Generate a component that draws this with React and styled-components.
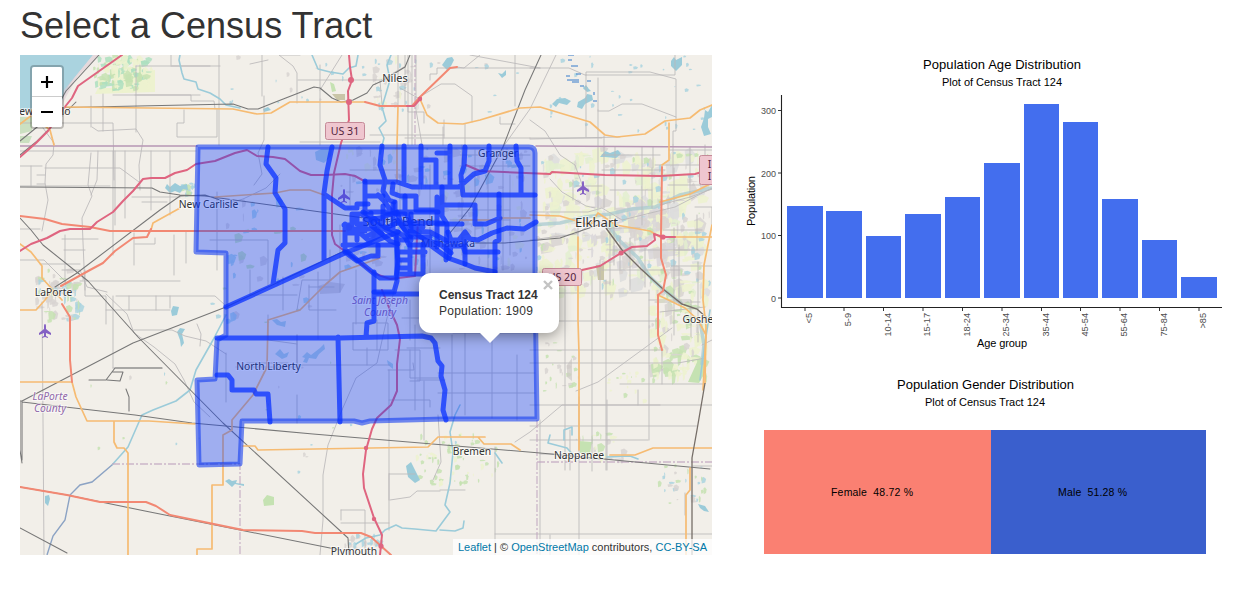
import React from "react";
import styled, { createGlobalStyle } from "styled-components";

const GlobalStyle = createGlobalStyle`
  body { margin: 0; background: #fff; color: #333; font-family: "Liberation Sans", Arial, sans-serif; }
  * { box-sizing: border-box; }
`;

const Page = styled.main`
  width: 1244px;
  height: 603px;
  padding: 6px 12px 0 20px;
  overflow: hidden;
`;
const Title = styled.h2`
  margin: 0 0 9px;
  font-size: 36px;
  line-height: 40px;
  font-weight: 400;
`;
const Columns = styled.div`
  display: grid;
  grid-template-columns: 692px 490px;
  gap: 30px;
`;
const MapFrame = styled.section`
  position: relative;
  width: 692px;
  height: 500px;
  overflow: hidden;
  background: #f2efe9;
`;
const MapDrawing = styled.svg`
  display: block;
  width: 692px;
  height: 500px;
`;
const Charts = styled.section`
  display: flex;
  flex-direction: column;
`;
const ChartDrawing = styled.svg`
  display: block;
  width: 490px;
  height: ${(p) => p.$height}px;
  font-family: "Liberation Sans", Arial, sans-serif;
`;
const ZoomControl = styled.div`
  position: absolute;
  left: 10px;
  top: 10px;
  width: 34px;
  border: 2px solid rgba(0, 0, 0, 0.22);
  border-radius: 4px;
  background-clip: padding-box;
  overflow: hidden;
`;
const ZoomButton = styled.button`
  display: flex;
  align-items: center;
  justify-content: center;
  width: 30px;
  height: 30px;
  padding: 0;
  border: 0;
  border-bottom: ${(p) => (p.$first ? "1px solid #ccc" : "0")};
  background: #fff;
  color: #000;
`;
const Popup = styled.div`
  position: absolute;
  left: 399px;
  top: 218px;
  width: 140px;
  height: 60px;
  padding: 14px 20px;
  border-radius: 12px;
  background: #fff;
  box-shadow: 0 3px 14px rgba(0, 0, 0, 0.4);
  font-size: 12px;
  line-height: 16px;
  letter-spacing: 0.25px;
  white-space: nowrap;
`;
const PopupTip = styled.span`
  position: absolute;
  left: 61px;
  top: 60px;
  border: 10px solid transparent;
  border-top-color: #fff;
  border-bottom: 0;
`;
const CloseButton = styled.svg`
  position: absolute;
  right: 6px;
  top: 7px;
  width: 10px;
  height: 10px;
`;
const PopupTitle = styled.strong`
  display: block;
  letter-spacing: 0;
`;
const Attribution = styled.div`
  position: absolute;
  right: 0;
  bottom: 0;
  height: 16px;
  padding: 0 5px;
  background: rgba(255, 255, 255, 0.75);
  font-size: 11px;
  line-height: 16px;
  white-space: nowrap;
`;
const MapLink = styled.a`
  color: #0078a8;
`;

const MINOR = [
  "M20 123H113L114 180M20 151H196M20 166H42M31 166V186M20 186H110M45 168H120L139 182M37 175H45M37 184H45M20 229H40",
  "M136 66V132M136 66H220M135 95H200M103 94L103 131M91 96V127M92 127L98 131 136 129 143 140 139 165 140 190M113 95H191V101H214L215 109",
  "M171 55V65M171 66H210M184 110V123H177V137H217V109M219 55V145M217 192V270M113 151V255M91 153L88 185 92 196 82 218 85 290",
  "M115 151V225M98 151L97 180 91 195M125 151V218M151 151V210M170 151V215M132 197H180M142 202H167M65 235V285M62 239H98M64 250H85M40 264H80M134 233V265",
  "M174 235V275M155 238V244H135M186 232V263M80 281H180M62 270H80L87 287 107 292M20 260H44L66 282M43 128L54 143 53 155 46 164 45 183 48 200 42 231",
  "M42 302L43 420 44 555M85 270V296H106V324M106 294L127 314 134 333 154 347 175 364 184 380 194 402 210 417M134 330H172L185 336 206 341 226 354",
  "M113 296V368M129 296V310M156 296V310M106 310H170M170 296V308M116 296H215L225 305M197 324L201 334 200 346M113 368H162",
  "M300 55L279 55 293 66 297 73V103M298 80H381L404 67M320 65V145M320 90L342 55M380 81L382 104M250 64L268 60M262 55V96M264 96V140L258 153 262 174 254 185",
  "M400 88L418 98 441 84 455 84 472 96V122M408 106V112H424V123M430 80V74H437V68H540M443 127V145M465 124V145M500 117V124H515M515 55V106M480 55L464 68 457 67",
  "M416 55L416 110 423 150M398 55V105M405 55L405 105M408 55V145M370 135H444M444 120V138M300 142H380M405 138H530M412 55V145",
  "M470 55L540 68M530 68H569L585 75H675V55M586 75V72H650L676 79V131H673V145M586 75V137M598 78V110M598 111H609L622 104H642L676 117M530 138H602M620 137L530 139",
  "M556 55L530 109 503 147M530 120L545 131 560 155 575 165 583 187M598 110V208M604 136V208M653 147V168M602 155H660M602 170H665M652 168V208M673 145V176M615 147V210M642 147V225",
  "M655 165H705V145M668 185H700M669 150H712M674 168V203M690 147V198M700 160V185M550 179L562 192 586 206 595 208M573 180V200M576 186H602M610 190H652",
  "M530 212H588L602 208 622 220 675 207 712 188M660 205L690 197 712 189M530 240L576 234 598 220M578 225V270M610 215V285M614 222V265M663 230H702M674 228V335M697 215V250",
  "M606 228H640M610 250H690M602 270H680M620 236V270M645 248V287M630 238V290M600 260V320M671 266H712M679 245V305M698 262V342M674 250H712M695 207H712V230",
  "M530 293H649M530 321H657M530 350H663M530 363H678L705 358M530 405H660M530 426H697M530 440H648",
  "M565 285V470M592 276V471M606 280V470M649 290V440",
  "M662 350V384M649 300H691V337M620 384H703M576 391L598 382 672 328M515 442L530 432 562 405H712M540 420V555M495 447V555M579 397V555M607 400V470M495 534H712M440 490H465",
  "M389 370V474H415M389 500V474M389 474V530M341 510H365V555M341 510V520M341 523H389M320 555L323 520 323 475 328 445 342 410 356 378 377 363 387 318 402 260M413 363L414 370H388",
  "M353 323H388V350H353V323M367 348V365M377 320V350M395 350H420V381H410M410 350V378H440M424 381V440M440 491H417L410 497 390 500M438 415L441 462 433 480",
  "M226 353V402M236 367H297V335M297 335V365H390M297 395V423M247 363H288M268 315L268 340 297 344M297 310L302 280H330V250M309 287H334M318 272V339M283 277V310",
  "M223 205L243 199 266 188 280 174M210 240H268V285M250 270V295H297M340 225V292M356 270V324M309 285V310H336M462 145V255M430 220V280M410 300V340M465 298V415M492 335V418",
  "M453 333H535M438 373H535M438 393H535M452 335V417M517 355V420M402 318H535M415 325V410M417 380H445M407 348H440M389 400H430V407",
  "M460 155H530M460 166H530M475 150V240M488 150V270M503 146V270M510 175V255M430 165V245M400 175V258M384 170V205M350 175V205M350 170H400M370 220H438M450 210H510M450 220H510",
  "M712 340L702 345M660 312L705 307M655 302H700M638 390V405M570 430V470M583 459H612M540 454H555M693 466H712M685 493V515M550 535V555"
];
const RAIL = [
  "M20 141L53 114 66 91 99 55M20 155L36 142 76 102M60 108L67 107.5 233 104 248 109 258 109 273 103 314 87 320 88 332 98 341 102 353 100 367 93 373 85 382 81 405 67 410 55",
  "M20 187L152 188 160 192 180 195 205 196 400 223M55 287L77 273 160 210 180 196 205 195 223 201M20 218L31 230 43 245 88 281 138 337 223 423 348 538 349 555",
  "M20 401L22 401 133 343 226 307 344 251M22 402L135 415 192 423 313 434 540 453 710 469M20 402L20 450 22 463M22 401V460M541 55L525 90 503 147 470 208 450 233",
  "M20 487L67 495 145 511 340 550M20 528L67 553M162 368H115L106 380H89M106 380L112 372H123L120 381 107 380M126 389L129 397V411M475 243H505L560 238 598 225"
];
const ORANGE = [
  "M65 107L233 109 257 114 271 113 290 102 365 102M20 124L32 115 50 130 54 145M20 244L31 252 42 266 42 278 62 300M20 310H36L45 300 52 290M180 208L153 223 151 230",
  "M20 382H72L76 397 87 421 113 421 149 421 195 424M114 422V442L117 448 124 448 128 453V555M197 555V549H212V485H223V435L232 430 232 420 253 395 267 367 268 320 300 310 326 284 340 272 380 258",
  "M243 446L255 446 258 450 428 447 438 437 485 437M440 437H478L484 444H511L520 450M610 455H635L653 448 712 448M420 99L427 115 438 123 463 124 480 120 520 108 540 107 590 122 605 135 617 137 645 134 665 121 690 118 700 110 712 105",
  "M398 106L397 145 397 182M669 123V160L662 165M215 197L275 193 290 190 310 190 324 195M530 215L560 216 590 225 598 213 616 225 650 231 660 237 712 237M578 237V320L579 353V450M712 225L704 265 703 300 706 326 705 383",
  "M660 202L690 194 712 183M658 295L685 308 698 320 706 335 703 390M690 468V490L686 495V555M500 218H530M460 220H500"
];
const TRUNK = [
  "M20 216L45 219 62 224 90 227 110 231 345 231M61 286L90 270 103 263 115 251 133 238 147 237 151 229M62 304L70 317V360L72 382M20 487L67 495 100 502H146L156 506 170 515 243 530 302 531 315 533 361 533 371 537 391 555",
  "M365 102L380 106H412L420 97 450 68 457 67M662 167L661 235 661 258 666 275 663 291 658 295V335L662 350"
];
const MOTORWAY = [
  "M122 55L95 74 78 86 72 98 64 108 48 131 36 143 20 157M20 251L31 244 47 238 60 231 70 229H90L97 222 113 212 123 201 133 191 143 179 151 178H165L175 173 187 170 196 164 215 161 235 153 247 150 257 156 273 157 285 159 300 171 311 175 325 175 345 174 355 176 366 182",
  "M466 165L480 171 550 174 552 172 605 175 660 176 695 174 705 171H712M349 55L350 67 352 80 348 91 349 120 341 143 334 173 332 195 332 235 335 244 350 255 373 273 390 279 415 276 418 220M382 290L390 310 397 325 400 339 397 364 397 391 391 405 377 418 372 429 366 450 363 474 364 488 374 518 382 535 380 555",
  "M582 270L600 266 621 253 632 247 647 246 655 240 654 234 663 237H675M407 106H414L421 98"
];
const WATER = [
  "M180 55L179 60 182 73 184 79 196 82 198 89 210 93 220 99 226 105 240 108M312 55L318 69 330 72 343 74 349 68 356 66 358 55M391 55L387 65 390 80 382 107 386 121 379 128 384 138 380 154",
  "M226 315L213 340 196 370 190 390 176 401 153 410 142 415 128 447 112 465M460 405L455 415 450 432 453 452 450 483 445 505 450 512 436 531 415 529 402 528 396 525 385 530 380 535 366 538 356 544M440 530L455 531 463 528 464 521",
  "M550 435L548 443 567 448 575 457M564 440V430L572 427V435M607 457L630 456 638 459M710 310L704 350 700 380M495 453L502 463"
];

const TRACTS = [
  "M268 147L266 164 276 178 275 193 285 209V243L278 250 273 284M332 147L327 171 324 193V260M226 307L345 253 398 232M324 194L336 202 345 208H357V204H368",
  "M382 146L380 165 385 180 383 191 389 200 394 202M365 182H397L412 187H459L474 174 485 171 489 161V146M404 146V184M421 146V187M422 160H436V187M437 153H450M450 146V187M465 147L464 166 461 175 463 195H535M516 146L517 161 521 168V194",
  "M365 181V212H395V202M365 196H383M378 195L384 201 391 211 396 214M393 184L392 193 400 196H416V210H441M442 187V216L447 224 446 260M437 197V247M442 205H475V224H486L500 218M499 194V240L495 242V273",
  "M536 222L524 229 507 228 492 233 478 240 470 239 465 232 458 241 447 241 430 232 410 231M465 232V264M448 232L451 240 463 240M398 212H438M405 196V213M407 214L411 226 423 227M437 224H462",
  "M345 224V250L372 272 380 278 396 278 398 262 396 236 375 223 363 215M344 225H352V214H365M357 214V224H365V231H357V240M343 245H397M345 233H360L369 241 382 234M345 229H375M365 220L380 218 397 212 402 226 409 237H430M367 236L397 223H443",
  "M363 212L375 219 386 228 398 232 405 237 409 245H430L448 258 465 264 475 268 495 272M383 206V222M371 213V225L390 241 398 244M397 220L411 236M401 224L427 241 440 244 451 253M393 204V230M387 214H405M411 214V235",
  "M397 235V281L394 292 374 292M410 237V274M423 244V274H397M398 252H425M398 260H410M398 268H410M398 240H411M449 258L451 246 463 246 465 252H498",
  "M345 252L357 261 371 256H378V245M374 272V321L367 323 366 337M374 294H440M217 338H340L422 336 431 338 435 343 438 361 442 366 441 376 445 390 443 410 446 420M338 337L340 422M217 375H228L232 380V390H254L256 394H268L270 422"
];
const COUNTY = "M198 147H529Q535 147 535 153V280L537 419 444 419 370 421 362 423 354 421 242 421 240 464 199 465 197 380 215 379 217 340 226 335V253L196 252Z";

const random = (seed) => {
  let s = seed;
  return () => {
    s = (s * 16807) % 2147483647;
    return s / 2147483647;
  };
};
const patches = (seed, x, y, w, h, count, size, colors) => {
  const next = random(seed);
  return Array.from({ length: count }, () => {
    const pw = 1 + next() * size;
    const ph = 1 + next() * size;
    const px = x + next() * (w - pw);
    const py = y + next() * (h - ph);
    const fill = colors[Math.floor(next() * colors.length)];
    return { d: `M${px} ${py}l${pw * 0.5} ${-ph * 0.2} ${pw * 0.5} ${ph * 0.4} ${-pw * 0.2} ${ph * 0.6} ${-pw * 0.7} ${ph * 0.2}z`, fill };
  });
};
const GREY = "#d8d3d1";
const YELLOW = "#edf2cf";
const GREEN = "#c5e2b2";
const BLUE = "#aad3df";
const PATCHES = [
  ...patches(71, 93, 55, 60, 38, 110, 9, [YELLOW, GREEN, "#addfbf", YELLOW]),
  ...patches(13, 536, 147, 176, 155, 260, 15, [GREY, YELLOW, YELLOW, YELLOW, "#dddddd", "#e3efcf"]),
  ...patches(17, 590, 195, 90, 75, 75, 13, ["#d9d6d9", GREY]),
  ...patches(18, 536, 150, 176, 145, 180, 6, [GREY, GREEN, GREY, YELLOW, BLUE]),
  ...patches(78, 648, 280, 62, 105, 120, 12, [YELLOW, YELLOW, GREY, GREEN]),
  ...patches(29, 340, 146, 190, 125, 180, 9, [GREY, GREY, YELLOW, GREY, BLUE]),
  ...patches(92, 598, 370, 65, 35, 20, 4, [GREEN, YELLOW]),
  ...patches(39, 415, 433, 85, 55, 65, 5, [GREEN, YELLOW, GREEN]),
  ...patches(44, 568, 432, 60, 32, 26, 8, [GREY, GREEN, YELLOW]),
  ...patches(52, 35, 269, 50, 54, 70, 8, [BLUE, GREY, GREY, GREEN]),
  ...patches(65, 372, 55, 48, 57, 32, 7, [GREY, GREY, YELLOW, BLUE]),
  ...patches(99, 540, 55, 168, 78, 35, 4, [BLUE]),
  ...patches(105, 206, 195, 110, 130, 40, 8, [GREEN, BLUE, GREY]),
  ...patches(114, 657, 463, 53, 42, 28, 5, [GREY, GREEN, BLUE]),
  ...patches(208, 226, 55, 300, 65, 35, 4, [BLUE, GREY, BLUE]),
  ...patches(305, 180, 182, 18, 16, 16, 5, [BLUE, GREEN]),
  ...patches(322, 80, 350, 390, 130, 24, 3, [GREY, GREEN, BLUE]),
  ...patches(407, 540, 340, 42, 52, 24, 5, [GREY, GREEN, GREY]),
  ...patches(422, 343, 534, 42, 17, 25, 6, [GREY, BLUE, GREY])
];
const PONDS = [
  "M165 188l2-4 3 3 5-4 5 3 7-2 1 6-5-1-3 4-5-2-5 2z", "M263 109l5-2 3 3-7 2z",
  "M442 65l5-7 5-1 2 3-3 6-4 4z", "M498 73l4 1 4-4v5l-4 3z", "M552 104l5-5 8-1 6 3-4 4-8-2-3 4z",
  "M577 107l1-5 7-4 2-4 5 1 1 5-8 4-3 5z", "M583 88l3-3 2 3 3 3-4 1z", "M600 157l5-6 5 2 8-3 3 4-5 4-11-1z", "M671 61l3-4 2 3 6-3v8l-6 6-5-5z",
  "M701 127l3-9 1-8 3 2 4-7v12l-4 2v8l3 7-7 2z", "M406 466l5-4 5 10 4 8-5 3-7-6z", "M698 504l7 2 4 6-5-1-4-3z",
  "M171 311l2-5 6 1-2 8-5 1z", "M225 481l4-2 3 2 5-1-1 3 8 1v2l-9-2-3 3z", "M45 496l4-1 1 4-2 7-3-3z", "M177 332l3-4 5 1-3 5 2 9-3 4-1-7z"
];
const COUNTY_PONDS = [
  "M302 357l5-5 4 3 9-7 4-4 1 5-6 5-3 5-7-1-2 5-4-1 2-4z",
  "M275 354l5-5 4 5 5-2-2 5-5 2z", "M387 360l6 4 0 5-5-4z", "M315 152l6-3 11 0-1 7-7 7-8-3z", "M272 320l5-1 4 3 5-1-1 6-8-2z"
];
const PLANE = "M0-7Q1-7 1-5V-2L6 2V4L1 2V5L3 6V7L0 6-3 7V6L-1 5V2L-6 4V2L-1-2V-5Q-1-7 0-7Z";

const MapLines = ({ lines, ...rest }) => (
  <g fill="none" strokeLinejoin="round" strokeLinecap="round" {...rest}>
    {lines.map((d, i) => <path key={i} d={d} />)}
  </g>
);

const PLACES = [
  { name: "Niles", x: 395, y: 82, size: 11 },
  { name: "New Carlisle", x: 208.5, y: 208, size: 10.3 },
  { name: "Granger", x: 498, y: 157, size: 10.3 },
  { name: "South Bend", x: 398, y: 226, size: 13, fill: "#333" },
  { name: "Mishawaka", x: 448, y: 247, size: 10.3, fill: "#333" },
  { name: "Elkhart", x: 596.5, y: 227, size: 13 },
  { name: "LaPorte", x: 53.5, y: 296, size: 10.3 },
  { name: "North Liberty", x: 268.5, y: 370, size: 10.3 },
  { name: "Bremen", x: 472, y: 455, size: 10.3 },
  { name: "Nappanee", x: 579, y: 459, size: 10.3 },
  { name: "Plymouth", x: 354, y: 555, size: 10.3 },
  { name: "Goshen", x: 701, y: 323, size: 10.3 },
  { name: "New Buffalo", x: 41, y: 115, size: 10.3 }
];

const Shield = ({ x, y, w, h = 17, lines }) => (
  <g>
    <rect x={x} y={y} width={w} height={h} rx="2" fill="#efc6cf" stroke="#c58a98" />
    {lines.map((line, i) => (
      <text key={i} x={x + w / 2} y={y + 12.5 + i * 12} textAnchor="middle" fontSize="10.6" fill="#53243d">{line}</text>
    ))}
  </g>
);

function TractMap() {
  return (
    <MapFrame>
      <MapDrawing viewBox="20 55 692 500" fontFamily='"Noto Sans", sans-serif'>
        <path fill="#aad3df" d="M20 55H93L75 77 69 85 62 101 40 108 20 111Z" />
        <path fill="#edf2cf" d="M113 88L135 73 155 70V92L95 94 98 88Z" />
        <path fill="#dec9d4" opacity=".6" d="M93 55H99L78 76 67 95 62 105 64 90Z" />
        <path fill="#b1d6a6" d="M20 117H32V131L20 134ZM20 136H32L29 143H20Z" opacity=".6" />
        <g>{PATCHES.map((p, i) => <path key={i} d={p.d} fill={p.fill} opacity=".85" />)}</g>
        <path fill="#c5e2b2" d="M688 382L698 360 705 358 706 371 699 383ZM263 500L267 495 274 497 274 505 264 506ZM579 441L592 442 590 454 580 453ZM330 82L334 84 336 91 332 92Z" />
        <path fill="#c9c5a8" d="M332 94H345V100H337ZM596 265H604V280H598Z" />
        <path fill="#cecbc6" d="M318 286L330 282 345 284 340 293 320 294ZM567 365L572 358V381L567 377Z" opacity=".7" />
        <g fill="#9bcbd9">{PONDS.map((d, i) => <path key={i} d={d} />)}</g>
        <g fill="#b4d4dc">{COUNTY_PONDS.map((d, i) => <path key={i} d={d} />)}</g>
        <path fill="none" stroke="#a9cbd0" strokeWidth="3.6" opacity=".75" d="M530 225L560 223 585 217 610 214 632 209 655 207 680 195 712 188M606 223L620 241 638 258 650 277 665 291 682 304M700 320L704 345 702 365" />
        <MapLines lines={MINOR} stroke="#bab8b9" strokeWidth=".85" />
        <MapLines lines={WATER} stroke="#9bcbd9" strokeWidth="1.6" />
        <path fill="none" stroke="#8ca3c4" strokeWidth="1.4" d="M112 465L92 482 80 485 70 495 65 520 53 536 47 555" />
        <path fill="none" stroke="#347bcb" strokeWidth="1" d="M568 55h6M568 60h4M571 66h7M566 76h4M576 74h5M567 80h12M572 82h7M587 81h4M580 86h4M594 92v3M593 101h4" />
        <path fill="none" stroke="#bfa3bd" strokeWidth="1.3" strokeDasharray="8 2 2 2" d="M415 55V145M112 464H240V555M537 420V555M537 462H712" opacity=".75" />
        <MapLines lines={["M20 146H197M536 146L712 147"]} stroke="#b797b4" strokeWidth="1.6" />
        <MapLines lines={RAIL} stroke="#777" strokeWidth="1.05" />
        <path fill="none" stroke="#766e68" strokeWidth="1.4" d="M606 228L622 250 641 269 663 289 682 304 697 309 707 318" />
        <MapLines lines={ORANGE} stroke="#f6bb72" strokeWidth="1.7" />
        <path fill="none" stroke="#766e68" strokeWidth="1.3" d="M705 383L697 430 692 458V555" />
        <MapLines lines={TRUNK} stroke="#f28873" strokeWidth="2" />
        <MapLines lines={MOTORWAY} stroke="#df6580" strokeWidth="2" />
        <g fill="#df6580">
          <circle cx="351" cy="80" r="3" /><circle cx="349" cy="102" r="3" /><circle cx="420" cy="99" r="2.2" />
          <circle cx="366" cy="448" r="2.2" /><circle cx="374" cy="519" r="2.2" /><circle cx="621" cy="253" r="2.6" />
          <circle cx="663" cy="237" r="2.6" /><circle cx="381" cy="546" r="2.6" />
        </g>
        {[[45, 331], [583, 188], [344, 196]].map(([x, y]) => <path key={x} d={PLANE} transform={`translate(${x} ${y})`} fill="#8461c4" />)}
        <Shield x={325.5} y={122.5} w={39} lines={["US 31"]} />
        <Shield x={542.5} y={268.5} w={39} lines={["US 20"]} />
        <Shield x={699.5} y={155.5} w={20} h={29} lines={["I", "I"]} />
        {PLACES.map((p) => (
          <text key={p.name} x={p.x} y={p.y} fontSize={p.size} textAnchor="middle" fill={p.fill || "#333"} stroke="#fff" strokeOpacity=".65" strokeWidth="2" paintOrder="stroke">{p.name}</text>
        ))}
        <g fill="#9168aa" fontSize="10.3" fontStyle="italic" textAnchor="middle" stroke="#fff" strokeOpacity=".55" strokeWidth="2" paintOrder="stroke">
          <text x="50" y="400">LaPorte</text><text x="50" y="412">County</text>
          <text x="380" y="304">Saint Joseph</text><text x="380" y="316">County</text>
        </g>
        <path d={COUNTY} fill="#0033ff" fillOpacity=".34" stroke="#0b35ef" strokeOpacity=".57" strokeWidth="5" strokeLinejoin="round" />
        <MapLines lines={TRACTS} stroke="#0a32ff" strokeOpacity=".76" strokeWidth="5" />
      </MapDrawing>
      <ZoomControl>
        <ZoomButton $first aria-label="Zoom in">
          <svg width="12" height="12" viewBox="0 0 12 12"><path d="M6 0V12M0 6H12" stroke="#000" strokeWidth="2.2" /></svg>
        </ZoomButton>
        <ZoomButton aria-label="Zoom out">
          <svg width="12" height="12" viewBox="0 0 12 12"><path d="M0 6H12" stroke="#000" strokeWidth="2.2" /></svg>
        </ZoomButton>
      </ZoomControl>
      <Popup>
        <PopupTitle>Census Tract 124</PopupTitle>
        Population: 1909
        <CloseButton viewBox="0 0 10 10"><path d="M1 1L9 9M9 1L1 9" stroke="#c3c3c3" strokeWidth="2.4" /></CloseButton>
        <PopupTip />
      </Popup>
      <Attribution>
        <MapLink>Leaflet</MapLink> | © <MapLink>OpenStreetMap</MapLink> contributors, <MapLink>CC-BY-SA</MapLink>
      </Attribution>
    </MapFrame>
  );
}

const AGES = [
  ["<5", 787, 823, 206], ["5-9", 826, 862, 211], ["10-14", 866, 901, 236], ["15-17", 905, 941, 214],
  ["18-24", 945, 980, 197], ["25-34", 984, 1020, 163], ["35-44", 1024, 1059, 104], ["45-54", 1063, 1098, 122],
  ["55-64", 1102, 1138, 199], ["75-84", 1142, 1177, 240], [">85", 1181, 1217, 277]
];

function AgeChart() {
  return (
    <ChartDrawing $height={305} viewBox="742 55 490 305">
      <g textAnchor="middle" fill="#000">
        <text x="1002" y="69" fontSize="13" textLength="158">Population Age Distribution</text>
        <text x="1002" y="86" fontSize="11" textLength="120">Plot of Census Tract 124</text>
        <text x="1002" y="347" fontSize="11" textLength="50">Age group</text>
        <text transform="translate(755 201) rotate(-90)" fontSize="11" textLength="50">Population</text>
      </g>
      {AGES.map(([label, left, right, top]) => (
        <g key={label}>
          <rect x={left} y={top} width={right - left} height={298 - top} fill="#436eee" />
          <path d={`M${(left + right) / 2} 308V311`} stroke="#333" />
          <text transform={`translate(${(left + right) / 2 + 7} 313) rotate(-90)`} fontSize="9.2" fill="#4d4d4d" textAnchor="end">{label}</text>
        </g>
      ))}
      {[[0, 298], [100, 235.5], [200, 173], [300, 110.5]].map(([value, y]) => (
        <g key={value}>
          <path d={`M778 ${y}H781`} stroke="#333" />
          <text x="776" y={y + 3.5} fontSize="9" fill="#4d4d4d" textAnchor="end">{value}</text>
        </g>
      ))}
      <path d="M781.5 95V307.5H1222" fill="none" stroke="#222" strokeWidth="1.1" />
    </ChartDrawing>
  );
}

function GenderChart() {
  return (
    <ChartDrawing $height={195} viewBox="742 360 490 195">
      <rect x="764" y="430" width="227" height="124" fill="#fa8072" />
      <rect x="991" y="430" width="215" height="124" fill="#3a5fcd" />
      <g textAnchor="middle" fill="#000">
        <text x="985.5" y="389" fontSize="13" textLength="177">Population Gender Distribution</text>
        <text x="985" y="406" fontSize="11" textLength="120">Plot of Census Tract 124</text>
        <text x="872" y="496" fontSize="10.5" textLength="82" xmlSpace="preserve">Female  48.72 %</text>
        <text x="1092.5" y="496" fontSize="10.5" textLength="69" xmlSpace="preserve">Male  51.28 %</text>
      </g>
    </ChartDrawing>
  );
}

export default function App() {
  return (
    <>
      <GlobalStyle />
      <Page>
        <Title>Select a Census Tract</Title>
        <Columns>
          <TractMap />
          <Charts>
            <AgeChart />
            <GenderChart />
          </Charts>
        </Columns>
      </Page>
    </>
  );
}
